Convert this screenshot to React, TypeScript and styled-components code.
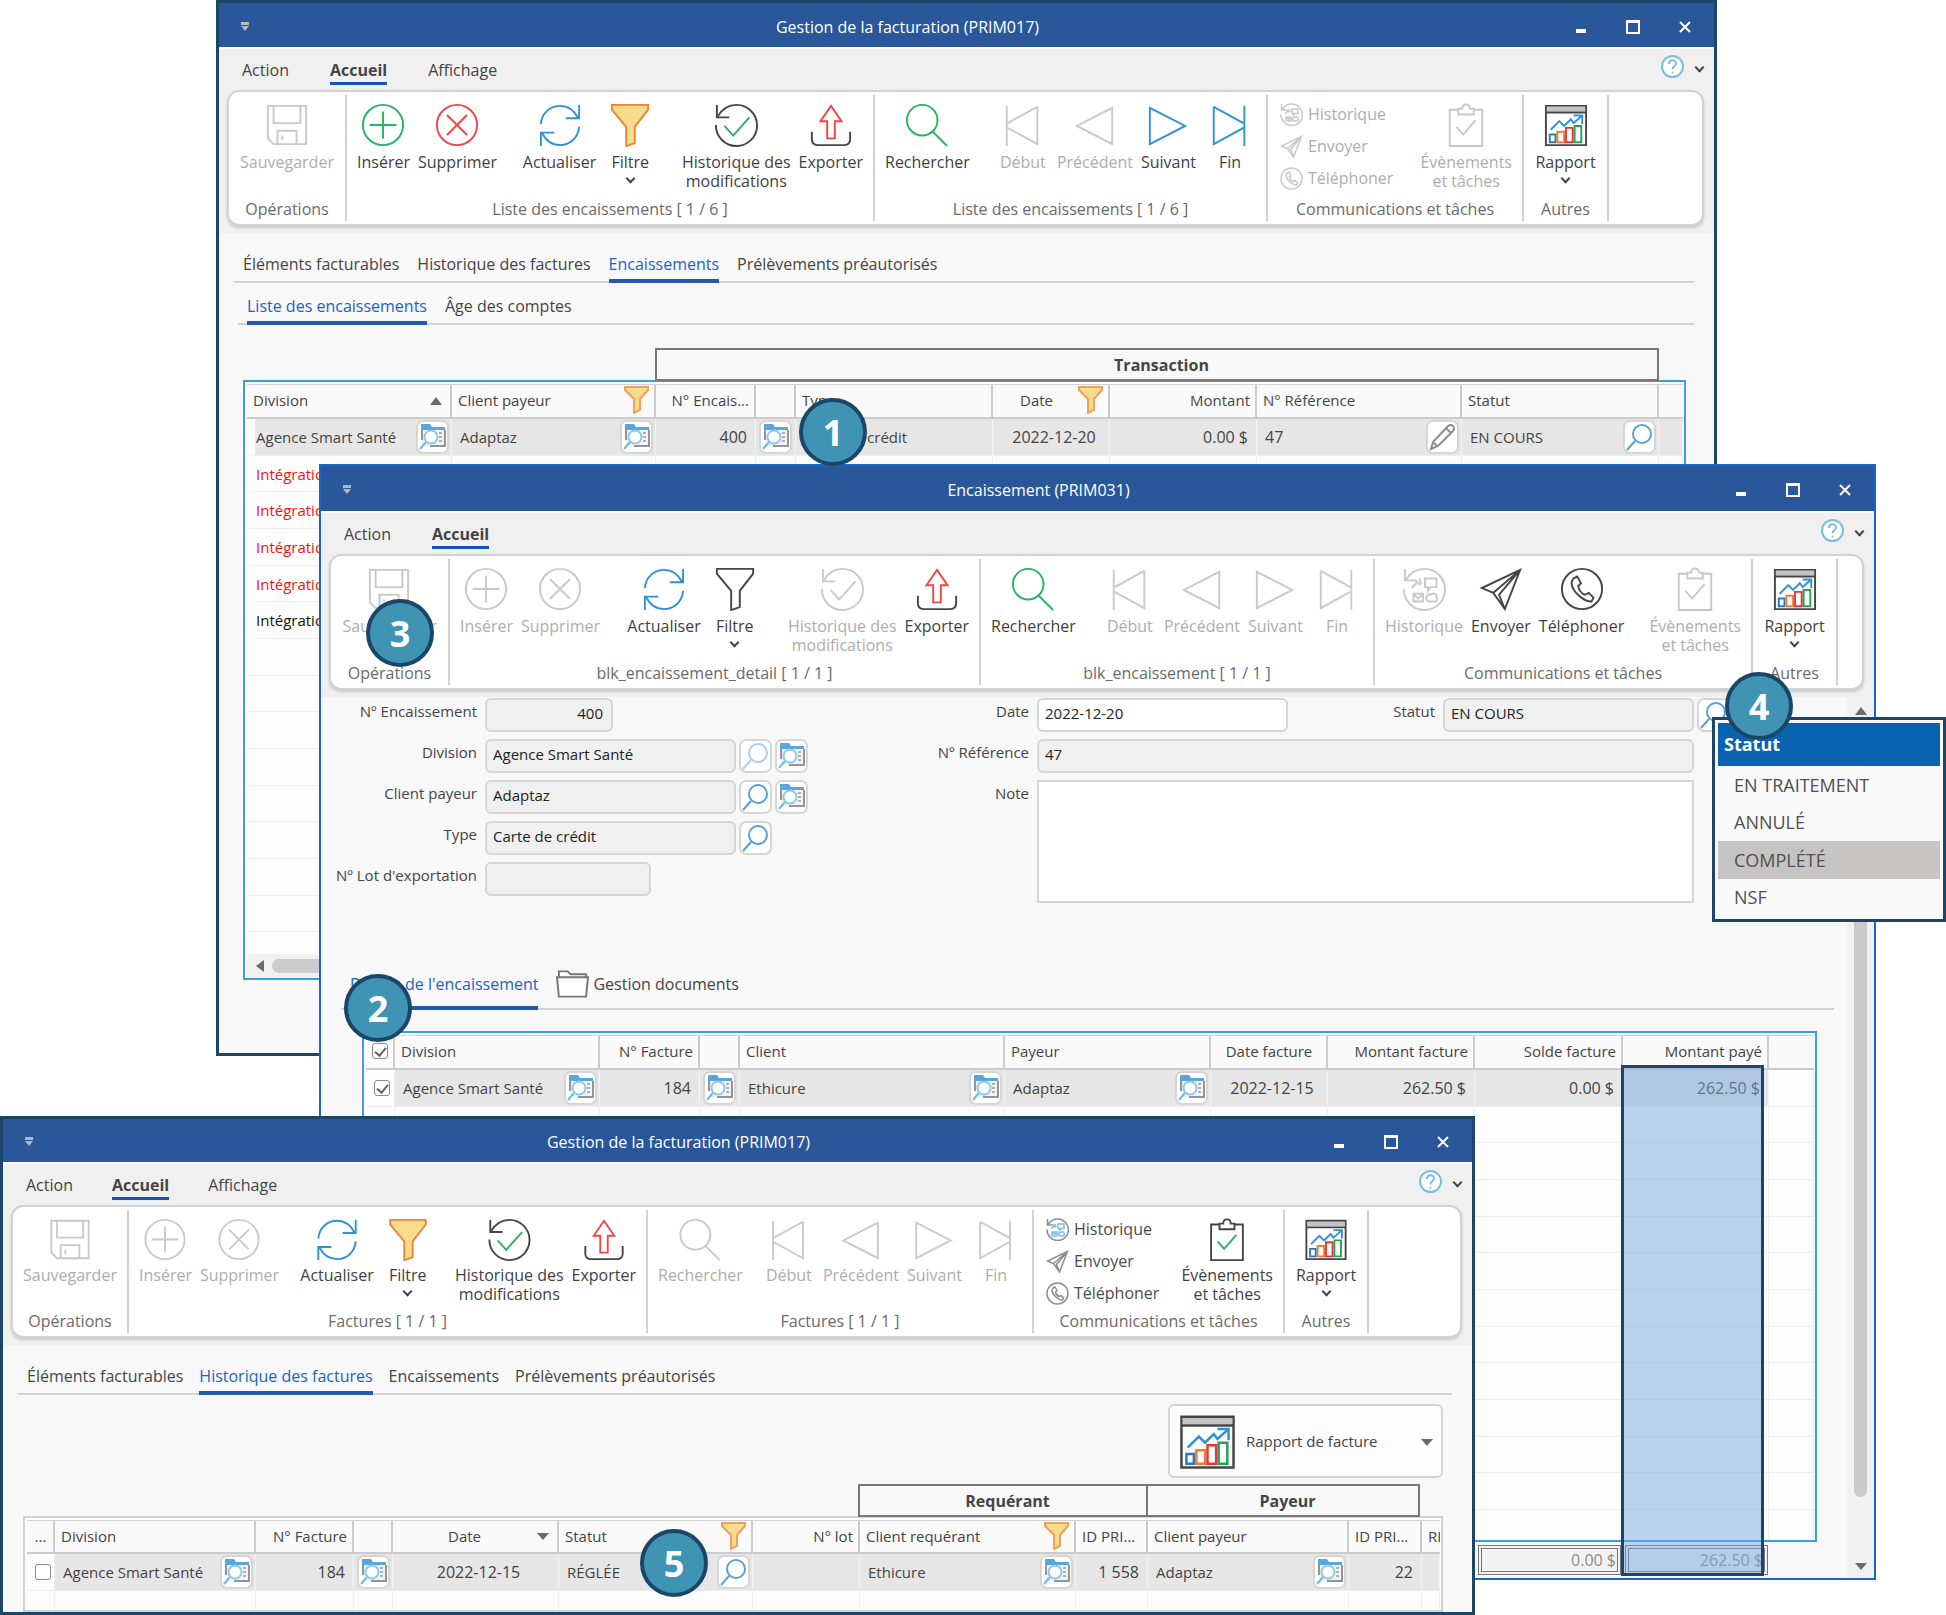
import React from 'react';
import styled, { createGlobalStyle, css } from 'styled-components';

const c = {
  navy: '#1b4669',
  title: '#2a579a',
  chrome: '#f0f0f0',
  body: '#f8f8f8',
  line: '#d2d2d2',
  text: '#444444',
  faded: '#adadad',
  off: '#c9c9c9',
  blue: '#1a62c8',
  bar: '#2459b0',
  sky: '#2e93d6',
  green: '#27b35f',
  red: '#f24545',
  dark: '#454545',
};

const GlobalStyle = createGlobalStyle`
  * { box-sizing: border-box; }
  body {
    margin: 0;
    background: #ffffff;
    color: ${c.text};
    font-family: 'Open Sans', 'Noto Sans', sans-serif;
    font-size: 16px;
    line-height: 22px;
  }
  button, input, textarea { font: inherit; color: inherit; }
  button { background: none; border: 0; padding: 0; margin: 0; }
`;

/* ------------------------------------------------------------------ desktop */

const Desktop = styled.main`
  position: relative;
  min-height: 1615px;
  overflow: hidden;
`;

const Window = styled.section<{ $x: number; $y: number; $w: number; $h: number; $edge?: string; $compact?: boolean }>`
  --edge: ${p => (p.$edge ? 2 : 3)}px;
  --bar: ${p => (p.$compact ? 46 : 47)}px;
  --icon: ${p => (p.$compact ? 43 : 44)}px;
  --icon-gap: ${p => (p.$compact ? 5 : 6)}px;
  --panel: ${p => (p.$compact ? 133 : 136)}px;
  --menu-gap: ${p => (p.$compact ? 39 : 41)}px;
  --tab-gap: ${p => (p.$compact ? 16 : 18)}px;
  --head: ${p => (p.$compact ? 33 : 34)}px;
  position: absolute;
  left: ${p => p.$x}px;
  top: ${p => p.$y}px;
  width: ${p => p.$w}px;
  height: ${p => p.$h}px;
  display: flex;
  flex-direction: column;
  overflow: hidden;
  border: var(--edge) solid ${p => p.$edge ?? c.navy};
  background: ${c.body};
`;

const TitleBar = styled.header`
  flex: none;
  display: flex;
  align-items: center;
  height: calc(var(--bar) - var(--edge));
  padding-top: 3px;
  background: ${c.title};
  color: #ffffff;
`;

const QuickAccess = styled.div`
  width: 50px;
  padding-left: 21px;
  display: flex;
`;

const Caption = styled.h1`
  flex: 1;
  margin: 0;
  font-size: 16px;
  font-weight: 400;
  line-height: 22px;
  text-align: center;
`;

const Controls = styled.div`
  width: 168px;
  padding-right: 22px;
  display: flex;
  justify-content: flex-end;
  gap: 38px;
  button { display: flex; }
`;

const Chrome = styled.div`
  flex: none;
  padding: 0 10px 7px 8px;
  background: ${c.chrome};
  border-top: 2px solid #fbfbfb;
`;

const MenuRow = styled.nav`
  display: flex;
  gap: var(--menu-gap);
  height: 41px;
  padding: 10px 0 5px 15px;
`;

const MenuItem = styled.button<{ $on?: boolean }>`
  height: 26px;
  line-height: 22px;
  padding-bottom: 1px;
  border-bottom: 3px solid ${p => (p.$on ? '#1157c4' : 'transparent')};
  font-weight: ${p => (p.$on ? 700 : 400)};
`;

const HelpBox = styled.div`
  margin-left: auto;
  display: flex;
  align-items: center;
  gap: 11px;
  height: 14px;
`;

const Panel = styled.div`
  display: flex;
  height: var(--panel);
  padding: 3px 0;
  background: #ffffff;
  border: 2px solid ${c.line};
  border-radius: 12px;
  box-shadow: 0 2px 3px rgba(0, 0, 0, 0.16);
`;

const Group = styled.div<{ $w: number }>`
  flex: 0 1 ${p => p.$w}px;
  display: flex;
  flex-direction: column;
  padding: 8px 6px 2px;
  border-right: 2px solid ${c.line};
`;

const ToolRow = styled.div<{ $center?: boolean }>`
  flex: 1;
  display: flex;
  justify-content: ${p => (p.$center ? 'center' : 'space-between')};
`;

const Cluster = styled.div`
  display: flex;
  align-items: flex-start;
`;

const GroupName = styled.div`
  line-height: 20px;
  color: #6a6a6a;
  text-align: center;
  white-space: nowrap;
`;

const ToolButton = styled.button<{ $off?: boolean }>`
  display: flex;
  flex-direction: column;
  align-items: center;
  min-width: 60px;
  padding: 0 4px;
  line-height: 19px;
  white-space: nowrap;
  color: ${p => (p.$off ? c.faded : '#3f3f3f')};
  > svg:first-child { height: var(--icon); width: 46px; margin-bottom: var(--icon-gap); }
`;

const Chevron = styled.span`
  display: block;
  width: 7px;
  height: 7px;
  margin: 3px 1px 0;
  border: solid ${c.dark};
  border-width: 0 2px 2px 0;
  transform: rotate(45deg);
`;

const SmallStack = styled.div`
  display: flex;
  flex-direction: column;
  margin-top: -5px;
  padding-left: 6px;
`;

const SmallTool = styled.button<{ $off?: boolean }>`
  display: flex;
  align-items: center;
  gap: 5px;
  height: 32px;
  color: ${p => (p.$off ? c.faded : '#4a4a4a')};
  svg { width: 23px; height: 23px; }
`;

/* --------------------------------------------------------------------- tabs */

const Tabs = styled.nav<{ $indent: number; $tall?: boolean }>`
  flex: none;
  display: flex;
  gap: var(--tab-gap);
  margin: 0 ${p => (p.$tall ? 13 : 20)}px 0 ${p => p.$indent}px;
  padding-left: 9px;
  line-height: ${p => (p.$tall ? 30 : 22)}px;
  box-shadow: inset 0 -2px 0 ${c.line};
`;

const Tab = styled.button<{ $on?: boolean; $tall?: boolean }>`
  display: flex;
  align-items: center;
  gap: 4px;
  line-height: inherit;
  white-space: nowrap;
  padding-bottom: ${p => (p.$tall ? 7 : 4)}px;
  border-bottom: 4px solid ${p => (p.$on ? c.bar : 'transparent')};
  color: ${p => (p.$on ? c.blue : c.text)};
`;

/* --------------------------------------------------------------------- grid */

const GridBox = styled.div<{ $plain?: boolean }>`
  flex: 1;
  min-height: 0;
  display: flex;
  flex-direction: column;
  overflow: hidden;
  padding: 2px 1px 0 2px;
  border: 2px solid ${p => (p.$plain ? c.line : '#3d9fd9')};
  background: #fdfdfd;
`;

const GridScroll = styled.div`
  flex: 1;
  min-height: 0;
  overflow: hidden;
`;

const Th = styled.th`
  height: var(--head);
  padding: 0 5px 2px 6px;
  overflow: hidden;
  font-weight: 400;
  background: #fafafa;
  border-right: 2px solid #cbcbcb;
  border-bottom: 2px solid #cbcbcb;
  &:last-child { border-right: 0; }
`;

const Td = styled.td<{ $sel?: boolean; $first?: boolean; $tone?: string; $tight?: boolean }>`
  height: 37px;
  padding: 0 2px 0 ${p => (p.$tight ? 3 : 8)}px;
  overflow: hidden;
  color: ${p => p.$tone ?? c.text};
  background: ${p => (p.$sel ? '#e6e6e6' : '#fdfdfd')};
  border-right: 1px solid ${p => (p.$sel ? '#f3f3f3' : '#eeeeee')};
  border-bottom: 1px solid #eeeeee;
  ${p => p.$first && css`border-left: 8px solid #fdfdfd; padding-left: 1px;`}
`;

const Table = styled.table`
  width: 100%;
  table-layout: fixed;
  border-collapse: separate;
  border-spacing: 0;
  border-top: 1px solid ${c.line};
  font-size: 15px;
  tbody tr:nth-child(3n + 2) td { height: 36px; }
`;

const Cell = styled.div<{ $align?: Align }>`
  display: flex;
  align-items: center;
  gap: 4px;
  height: 100%;
  span {
    flex: 1;
    white-space: nowrap;
    text-align: ${p => p.$align ?? 'left'};
  }
`;

const CellText = styled.span<{ $num?: boolean; $pad?: boolean }>`
  font-size: ${p => (p.$num ? 16 : 15)}px;
  padding-right: ${p => (p.$pad ? 6 : 0)}px;
`;

const IconButton = styled.button<{ $fade?: boolean }>`
  flex: none;
  display: flex;
  align-items: center;
  justify-content: center;
  width: 33px;
  height: 34px;
  background: #ffffff;
  border: 2px solid #d6d6d6;
  border-radius: 7px;
  svg { opacity: ${p => (p.$fade ? 0.5 : 1)}; }
`;

const Check = styled.input`
  appearance: none;
  display: block;
  width: 16px;
  height: 16px;
  margin: 0;
  background: #ffffff;
  border: 1px solid #8b8b8b;
  border-radius: 3px;
  &:checked::after {
    content: '';
    display: block;
    width: 5px;
    height: 9px;
    margin: 1px auto 0;
    border: solid #606060;
    border-width: 0 2px 2px 0;
    transform: rotate(40deg);
  }
`;

const Bands = styled.div`
  flex: none;
  display: flex;
  position: relative;
  z-index: 1;
  margin-bottom: -1px;
`;

const Band = styled.div<{ $w: number }>`
  width: ${p => p.$w}px;
  height: 33px;
  line-height: 31px;
  margin-right: -2px;
  padding-left: 9px;
  border: 2px solid #777777;
  font-weight: 700;
  text-align: center;
`;

const Arrow = styled.i<{ $dir: 'up' | 'down' | 'left' }>`
  flex: none;
  width: 0;
  height: 0;
  margin: 2px 3px 0;
  border: 6px solid transparent;
  ${p => p.$dir === 'up' && css`border-bottom: 8px solid #6b6b6b; border-top: 0;`}
  ${p => p.$dir === 'down' && css`border-top: 7px solid #6b6b6b; border-bottom: 0;`}
  ${p => p.$dir === 'left' && css`border-right: 8px solid #6b6b6b; border-left: 0; margin-top: 0;`}
`;

const HScroll = styled.div`
  flex: none;
  display: flex;
  align-items: center;
  gap: 5px;
  height: 24px;
  padding: 0 6px;
  background: ${c.chrome};
`;

const HThumb = styled.div`
  flex: 1;
  height: 14px;
  border-radius: 7px;
  background: #cccccc;
`;

/* ----------------------------------------------------------- window bodies */

const ListBody = styled.div`
  flex: 1;
  min-height: 0;
  display: flex;
  flex-direction: column;
  padding-top: 20px;
`;

const SubTabs = styled.div`
  margin-top: 12px;
`;

const ListArea = styled.div`
  flex: 1;
  min-height: 0;
  display: flex;
  flex-direction: column;
  margin: 23px 28px 73px 24px;
`;

const InvoiceArea = styled(ListArea)`
  margin: 9px 29px 0 20px;
`;

const BandOffset = styled.div<{ $w: number }>`
  width: ${p => p.$w}px;
`;

const ReportButton = styled.button`
  align-self: flex-end;
  flex: none;
  display: flex;
  align-items: center;
  gap: 10px;
  width: 275px;
  height: 74px;
  margin-bottom: 6px;
  padding: 0 5px 0 9px;
  background: #fdfdfd;
  border: 2px solid #d4d4d4;
  border-radius: 6px;
  font-size: 15px;
  svg { width: 57px; height: 57px; }
  span { flex: 1; text-align: left; }
`;

const DetailBody = styled.div`
  flex: 1;
  min-height: 0;
  display: flex;
`;

const DetailMain = styled.div`
  flex: 1;
  min-width: 0;
  display: flex;
  flex-direction: column;
`;

const VScroll = styled.div`
  width: 27px;
  display: flex;
  flex-direction: column;
  align-items: center;
  gap: 6px;
  padding: 8px 0;
  background: #f1f1f1;
`;

const VThumb = styled.div`
  width: 13px;
  flex: 1;
  margin-bottom: 58px;
  border-radius: 7px;
  background: #cacaca;
`;

const Form = styled.form`
  flex: none;
  display: flex;
  justify-content: space-between;
  gap: 100px;
  margin-bottom: 66px;
  padding: 1px 117px 0 12px;
  font-size: 15px;
`;

const FormColumn = styled.div<{ $grow?: boolean }>`
  display: flex;
  flex-direction: column;
  gap: 7px;
  ${p => p.$grow && css`flex: 0 0 821px;`}
`;

const Line = styled.div<{ $inset?: boolean }>`
  display: flex;
  align-items: flex-start;
  gap: 3px;
  padding-right: ${p => (p.$inset ? 36 : 0)}px;
`;

const Label = styled.label<{ $w?: number }>`
  width: ${p => (p.$w ? `${p.$w}px` : 'auto')};
  margin-right: 5px;
  line-height: 26px;
  text-align: right;
  white-space: nowrap;
`;

const Field = styled.input<{ $w?: number; $right?: boolean; $open?: boolean }>`
  ${p => (p.$w ? css`width: ${p.$w}px;` : css`flex: 1;`)}
  min-width: 0;
  height: 34px;
  padding: 0 8px 5px 6px;
  color: #222222;
  background: ${p => (p.$open ? '#ffffff' : c.chrome)};
  border: 2px solid #d5d5d5;
  border-radius: 6px;
  text-align: ${p => (p.$right ? 'right' : 'left')};
`;

const Note = styled.textarea`
  flex: 1;
  height: 123px;
  padding: 6px;
  resize: none;
  background: #ffffff;
  border: 2px solid #d5d5d5;
`;

const Push = styled.div`
  flex: 1;
`;

const DetailGrid = styled.div`
  flex: 1;
  min-height: 0;
  display: flex;
  margin: 21px 30px 0 41px;
`;

const Totals = styled.div`
  flex: none;
  display: flex;
  justify-content: flex-end;
  gap: 4px;
  margin: 3px 79px 3px 0;
`;

const Total = styled.output`
  width: 143px;
  height: 30px;
  padding: 0 1px;
  line-height: 23px;
  text-align: right;
  color: #8c8c8c;
  background: #f3f3f3;
  border: 4px double #777777;
`;

/* ----------------------------------------------------------------- overlays */

const Highlight = styled.div`
  position: absolute;
  left: 1621px;
  top: 1065px;
  width: 143px;
  height: 511px;
  background: rgba(120, 168, 220, 0.5);
  border: 3px solid ${c.navy};
`;

const Popup = styled.div`
  position: absolute;
  left: 1712px;
  top: 717px;
  width: 234px;
  height: 205px;
  display: flex;
  flex-direction: column;
  padding: 3px;
  background: #f9f9f9;
  border: 3px solid ${c.navy};
  font-size: 18px;
`;

const PopupTitle = styled.div`
  height: 43px;
  padding-left: 6px;
  line-height: 43px;
  color: #ffffff;
  background: #0a63b1;
  font-weight: 700;
`;

const Option = styled.button<{ $on?: boolean }>`
  flex: 1;
  padding-left: 16px;
  text-align: left;
  color: #505050;
  background: ${p => (p.$on ? '#c7c5c3' : 'transparent')};
`;

const Step = styled.div<{ $x: number; $y: number }>`
  position: absolute;
  left: ${p => p.$x}px;
  top: ${p => p.$y}px;
  width: 68px;
  height: 68px;
  line-height: 62px;
  border: 4px solid ${c.navy};
  border-radius: 50%;
  color: #ffffff;
  background: #3f93b3;
  font-size: 36px;
  font-weight: 700;
  text-align: center;
`;

/* -------------------------------------------------------------------- icons */

type IconProps = { off?: boolean; on?: boolean };

const Svg = ({ children, size = 46, w = 2 }: { children: React.ReactNode; size?: number; w?: number }) => (
  <svg width={size} height={size} viewBox="0 0 46 46" fill="none" strokeWidth={w} aria-hidden="true">
    {children}
  </svg>
);

const SaveIcon = ({ off }: IconProps) => (
  <Svg>
    <g stroke={off ? c.off : c.dark}>
      <path d="M3 3H43V43H9L3 37Z M9 3V21H37V3 M13 43V29H33V43 M18 34V39" />
    </g>
  </Svg>
);

const InsertIcon = ({ off }: IconProps) => (
  <Svg>
    <g stroke={off ? c.off : c.green}>
      <circle cx="23" cy="23" r="21" />
      <path d="M23 9V37M9 23H37" />
    </g>
  </Svg>
);

const DeleteIcon = ({ off }: IconProps) => (
  <Svg>
    <g stroke={off ? c.off : c.red}>
      <circle cx="23" cy="23" r="21" />
      <path d="M12.500 12.500L33.500 33.500M33.500 12.500L12.500 33.500" />
    </g>
  </Svg>
);

const RefreshIcon = () => (
  <Svg>
    <g stroke={c.sky}>
      <path d="M3 22C4 10 13 3 23 3C31 3 38 8 42 16M43 2V16H29" />
      <path d="M43 25C42 37 33 44 23 44C15 44 8 39 4 31M3 45V31H17" />
    </g>
  </Svg>
);

const FunnelIcon = ({ on }: IconProps) => (
  <Svg>
    <path
      d="M4 2H42V7L28 25V42L19 45V25L4 7Z"
      stroke={on ? '#ec8435' : c.dark}
      fill={on ? '#f8db8c' : 'none'}
    />
  </Svg>
);

const HeadFunnel = () => (
  <svg width="25" height="28" viewBox="0 0 25 28" aria-hidden="true">
    <path d="M1 1H24V4L16 13V24L10 27V13L1 4Z" fill="#f8db8c" stroke="#f0a05a" strokeWidth="2" />
  </svg>
);

const HistoryIcon = ({ off }: IconProps) => (
  <Svg>
    <g stroke={off ? c.off : c.dark}>
      <path d="M2 23A21.500 21.500 0 1 0 23.500 2C15 2 8 7 4 14" />
      <path d="M3 2V15H16" />
    </g>
    <path d="M11 24L20 34L37 15" stroke={off ? c.off : c.green} />
  </Svg>
);

const ExportIcon = () => (
  <Svg>
    <path d="M3 30V38Q3 44 9 44H37Q43 44 43 38V30" stroke={c.dark} />
    <path d="M23 3L34 19H27V37H19V19H12Z" stroke={c.red} />
  </Svg>
);

const SearchIcon = ({ off }: IconProps) => (
  <Svg>
    <g stroke={off ? c.off : c.green}>
      <circle cx="18" cy="18" r="16" />
      <path d="M29 30L44 45" />
    </g>
  </Svg>
);

const FirstIcon = ({ off }: IconProps) => (
  <Svg><path d="M6 3V45M38 4V43L7 26M38 4L7 21" stroke={off ? c.off : c.sky} /></Svg>
);

const PrevIcon = ({ off }: IconProps) => (
  <Svg><path d="M41 5V43L4 24Z" stroke={off ? c.off : c.sky} /></Svg>
);

const NextIcon = ({ off }: IconProps) => (
  <Svg><path d="M4 5V43L41 24Z" stroke={off ? c.off : c.sky} /></Svg>
);

const LastIcon = ({ off }: IconProps) => (
  <Svg><path d="M38 3V45M6 4V43L37 26M6 4L37 21" stroke={off ? c.off : c.sky} /></Svg>
);

const TaskIcon = ({ off }: IconProps) => (
  <Svg>
    <path d="M15 7H6V45H40V7H31M15 6H19C19 0 27 0 27 6H31V12H15Z" stroke={off ? c.off : c.dark} />
    <path d="M13 25L20 33L33 18" stroke={off ? c.off : c.green} />
  </Svg>
);

const ReportIcon = () => (
  <Svg>
    <path d="M2 3H44V44H2Z" stroke={c.dark} />
    <path d="M3 4H43V9H3Z" fill="#c4c4c4" stroke="none" />
    <path d="M2 10H44" stroke={c.dark} />
    <path d="M7 28L16 19L21 24L28 17L31 21L40 13M31 13H40V22" stroke={c.sky} />
    <path d="M6 33H12V41H6Z" stroke="#2b78c2" />
    <path d="M14 30H21V41H14Z" stroke="#ef7b35" />
    <path d="M23 26H30V41H23Z" stroke="#ea3434" />
    <path d="M32 24H39V41H32Z" stroke="#22a455" />
  </Svg>
);

const CommIcon = ({ off, on }: IconProps) => (
  <Svg w={on ? 3 : 2}>
    <path d="M2 23A21.500 21.500 0 1 0 23.500 2C15 2 8 7 4 13M3 2V14H15" stroke={off ? c.off : '#8d8d8d'} />
    <g stroke={off ? c.off : '#7fc0ea'}>
      <path d="M24 12H36V21H30L27 25V21H24Z" />
      <path d="M12 28H22V36H12ZM12 28L17 33L22 28" />
      <path d="M27 36C23 32 27 28 30 29C33 26 37 29 36 32C38 35 36 36 34 36Z" />
      <path d="M10 22L15 17M14 14L19 19M18 12L20 18" />
    </g>
  </Svg>
);

const SendIcon = ({ off, on }: IconProps) => (
  <Svg w={on ? 3 : 2}>
    <path d="M43 3L3 22L15 27L27 44ZM43 3L15 27M43 3L21 29L27 44" stroke={off ? c.off : on ? '#8d8d8d' : c.dark} />
  </Svg>
);

const PhoneIcon = ({ off, on }: IconProps) => (
  <Svg w={on ? 3 : 2}>
    <g stroke={off ? c.off : on ? '#8d8d8d' : c.dark}>
      <circle cx="23" cy="23" r="21" />
      <path d="M14 12L18 10L22 17L19 20C20 24 23 28 26 29L30 27L35 32L33 36C26 37 12 26 12 16Z" />
    </g>
  </Svg>
);

const LookupIcon = () => (
  <svg width="27" height="26" viewBox="0 0 27 26" fill="none" aria-hidden="true">
    <path d="M3 5H26V22H3Z" fill="#f3f3f3" />
    <path d="M2 7V0H11L13 3H26V6H2Z" fill="#5aa5db" />
    <path d="M3 6V16M26 6V22H11" stroke="#949494" strokeWidth="2" />
    <path d="M20 9H23M20 13H23M20 17H23" stroke="#b0b0b0" strokeWidth="2" />
    <path d="M1 25L7 18" stroke="#6db8ea" strokeWidth="2" />
    <circle cx="12" cy="13" r="6.500" fill="#ffffff" stroke="#8ac8f0" strokeWidth="2" />
  </svg>
);

const LensIcon = () => (
  <svg width="27" height="27" viewBox="0 0 27 27" fill="none" stroke="#5a9fd8" strokeWidth="2" aria-hidden="true">
    <circle cx="16" cy="10" r="9" />
    <path d="M9 17L1 26" />
  </svg>
);

const PencilIcon = () => (
  <svg width="27" height="27" viewBox="0 0 27 27" fill="none" stroke="#8d8d8d" strokeWidth="2" aria-hidden="true">
    <path d="M2 25L4 18L19 2Q22 0 24 2Q26 5 24 7L9 22ZM17 4L22 9M5 19L8 22" />
  </svg>
);

const FolderIcon = () => (
  <svg width="33" height="30" viewBox="0 0 34 30" fill="#ffffff" stroke="#777777" strokeWidth="2" aria-hidden="true">
    <path d="M3 8V2H12L15 5H31V8" />
    <path d="M1 8H33L31 28H3Z" />
  </svg>
);

const HelpIcon = () => (
  <svg width="23" height="23" viewBox="0 0 23 23" aria-hidden="true">
    <circle cx="11.500" cy="11.500" r="10.500" fill="#ffffff" stroke="#7cbce4" strokeWidth="2" />
    <path d="M8 9C8 4 15 4 15 8.500C15 11 11.500 11 11.500 14.500" fill="none" stroke="#7cbce4" strokeWidth="2" />
    <circle cx="11.500" cy="17.500" r="1" fill="#7cbce4" />
  </svg>
);

/* --------------------------------------------------------- shared fragments */

const Tool = ({ icon, label, second, off, menu }: {
  icon: React.ReactNode; label: string; second?: string; off?: boolean; menu?: boolean;
}) => (
  <ToolButton type="button" $off={off}>
    {icon}
    <span>{label}</span>
    {second && <span>{second}</span>}
    {menu && <Chevron />}
  </ToolButton>
);

type RibbonProps = {
  menu: string[];
  list: string;
  nav: string;
  widths: number[];
  edit?: boolean;
  filtered?: boolean;
  history?: boolean;
  search?: boolean;
  forward?: boolean;
  tasks?: boolean;
  comm: 'small' | 'large';
};

const Ribbon = (p: RibbonProps) => (
  <Chrome>
    <MenuRow>
      {p.menu.map(m => <MenuItem key={m} type="button" $on={m === 'Accueil'}>{m}</MenuItem>)}
      <HelpBox>
        <HelpIcon />
        <Chevron />
      </HelpBox>
    </MenuRow>
    <Panel>
      <Group $w={p.widths[0]}>
        <ToolRow $center><Tool off icon={<SaveIcon off />} label="Sauvegarder" /></ToolRow>
        <GroupName>Opérations</GroupName>
      </Group>
      <Group $w={p.widths[1]}>
        <ToolRow>
          <Cluster>
            <Tool off={!p.edit} icon={<InsertIcon off={!p.edit} />} label="Insérer" />
            <Tool off={!p.edit} icon={<DeleteIcon off={!p.edit} />} label="Supprimer" />
          </Cluster>
          <Cluster>
            <Tool icon={<RefreshIcon />} label="Actualiser" />
            <Tool menu icon={<FunnelIcon on={p.filtered} />} label="Filtre" />
          </Cluster>
          <Cluster>
            <Tool off={!p.history} icon={<HistoryIcon off={!p.history} />} label="Historique des" second="modifications" />
            <Tool icon={<ExportIcon />} label="Exporter" />
          </Cluster>
        </ToolRow>
        <GroupName>{p.list}</GroupName>
      </Group>
      <Group $w={p.widths[2]}>
        <ToolRow>
          <Cluster><Tool off={!p.search} icon={<SearchIcon off={!p.search} />} label="Rechercher" /></Cluster>
          <Cluster>
            <Tool off icon={<FirstIcon off />} label="Début" />
            <Tool off icon={<PrevIcon off />} label="Précédent" />
            <Tool off={!p.forward} icon={<NextIcon off={!p.forward} />} label="Suivant" />
            <Tool off={!p.forward} icon={<LastIcon off={!p.forward} />} label="Fin" />
          </Cluster>
        </ToolRow>
        <GroupName>{p.nav}</GroupName>
      </Group>
      <Group $w={p.widths[3]}>
        <ToolRow>
          {p.comm === 'small' ? (
            <SmallStack>
              <SmallTool type="button" $off={!p.tasks}><CommIcon on off={!p.tasks} />Historique</SmallTool>
              <SmallTool type="button" $off={!p.tasks}><SendIcon on off={!p.tasks} />Envoyer</SmallTool>
              <SmallTool type="button" $off={!p.tasks}><PhoneIcon on off={!p.tasks} />Téléphoner</SmallTool>
            </SmallStack>
          ) : (
            <Cluster>
              <Tool off icon={<CommIcon off />} label="Historique" />
              <Tool icon={<SendIcon />} label="Envoyer" />
              <Tool icon={<PhoneIcon />} label="Téléphoner" />
            </Cluster>
          )}
          <Cluster>
            <Tool off={!p.tasks} icon={<TaskIcon off={!p.tasks} />} label="Évènements" second="et tâches" />
          </Cluster>
        </ToolRow>
        <GroupName>Communications et tâches</GroupName>
      </Group>
      <Group $w={p.widths[4]}>
        <ToolRow $center><Tool menu icon={<ReportIcon />} label="Rapport" /></ToolRow>
        <GroupName>Autres</GroupName>
      </Group>
    </Panel>
  </Chrome>
);

const Title = ({ children }: { children: string }) => (
  <TitleBar>
    <QuickAccess>
      <svg width="10" height="10" viewBox="0 0 10 10" aria-hidden="true">
        <path d="M1 0H9V3H1ZM1 4H9L5 9Z" fill="#b4b8bd" />
      </svg>
    </QuickAccess>
    <Caption>{children}</Caption>
    <Controls>
      <button type="button" aria-label="Réduire">
        <svg width="14" height="14" viewBox="0 0 14 14"><path d="M2 9H12V13H2Z" fill="#ffffff" /></svg>
      </button>
      <button type="button" aria-label="Agrandir">
        <svg width="14" height="14" viewBox="0 0 14 14">
          <path d="M1 1H13V13H1ZM1 2H13" fill="none" stroke="#ffffff" strokeWidth="2" />
        </svg>
      </button>
      <button type="button" aria-label="Fermer">
        <svg width="14" height="14" viewBox="0 0 14 14">
          <path d="M2 2L12 12M12 2L2 12" stroke="#ffffff" strokeWidth="2" />
        </svg>
      </button>
    </Controls>
  </TitleBar>
);

type Align = 'left' | 'center' | 'right';
type Column = { w?: number; label?: React.ReactNode; align?: Align; mark?: React.ReactNode };
type Entry = { text?: React.ReactNode; align?: Align; num?: boolean; action?: React.ReactNode; blank?: boolean };

const Look = ({ name = 'Consulter' }: { name?: string }) => (
  <IconButton type="button" aria-label={name}><LookupIcon /></IconButton>
);

const Lens = ({ fade }: { fade?: boolean }) => (
  <IconButton type="button" aria-label="Rechercher" $fade={fade}><LensIcon /></IconButton>
);

const DataGrid = ({ columns, row, below = [], empty, mark }: {
  columns: Column[]; row: Entry[]; below?: { text: string; tone: string }[]; empty: number; mark?: boolean;
}) => (
  <GridScroll>
    <Table>
      <colgroup>{columns.map((col, i) => <col key={i} width={col.w} />)}</colgroup>
      <thead>
        <tr>
          {columns.map((col, i) => (
            <Th key={i} scope="col">
              <Cell $align={col.align}><CellText>{col.label}</CellText>{col.mark}</Cell>
            </Th>
          ))}
        </tr>
      </thead>
      <tbody>
        <tr>
          {row.map((e, i) => (
            <Td key={i} $sel={!e.blank} $first={mark && i === 0} $tight={!e.text && !!e.action}>
              <Cell $align={e.align}>
                {(e.text || !e.action) && <CellText $num={e.num} $pad={e.align === 'right' && !e.action}>{e.text}</CellText>}
                {e.action}
              </Cell>
            </Td>
          ))}
        </tr>
        {below.map((b, r) => (
          <tr key={r}>
            {columns.map((_, i) => (
              <Td key={i} $tone={b.tone} $first={mark && i === 0}>{i === 0 && <Cell><CellText>{b.text}</CellText></Cell>}</Td>
            ))}
          </tr>
        ))}
        {Array.from({ length: empty }, (_, r) => (
          <tr key={`e${r}`}>{columns.map((_, i) => <Td key={i} />)}</tr>
        ))}
      </tbody>
    </Table>
  </GridScroll>
);

/* ------------------------------------------------------------------ windows */

const ReceiptList = () => (
  <Window $x={216} $y={0} $w={1501} $h={1056}>
    <Title>Gestion de la facturation (PRIM017)</Title>
    <Ribbon
      menu={['Action', 'Accueil', 'Affichage']}
      list="Liste des encaissements [ 1 / 6 ]"
      nav="Liste des encaissements [ 1 / 6 ]"
      widths={[118, 528, 393, 256, 85]}
      edit filtered history search forward
      comm="small"
    />
    <ListBody>
      <Tabs $indent={15}>
        <Tab type="button">Éléments facturables</Tab>
        <Tab type="button">Historique des factures</Tab>
        <Tab type="button" $on>Encaissements</Tab>
        <Tab type="button">Prélèvements préautorisés</Tab>
      </Tabs>
      <SubTabs>
        <Tabs $indent={19}>
          <Tab type="button" $on>Liste des encaissements</Tab>
          <Tab type="button">Âge des comptes</Tab>
        </Tabs>
      </SubTabs>
      <ListArea>
        <Bands><BandOffset $w={412} /><Band $w={1004}>Transaction</Band></Bands>
        <GridBox>
          <DataGrid
            mark
            columns={[
              { w: 205, label: 'Division', mark: <Arrow $dir="up" /> },
              { w: 204, label: 'Client payeur', mark: <HeadFunnel /> },
              { w: 100, label: 'N° Encais...', align: 'right' },
              { w: 40 },
              { w: 197, label: 'Type' },
              { w: 117, label: 'Date', align: 'center', mark: <HeadFunnel /> },
              { w: 147, label: 'Montant', align: 'right' },
              { w: 205, label: 'N° Référence' },
              { w: 197, label: 'Statut' },
              {},
            ]}
            row={[
              { text: 'Agence Smart Santé', action: <Look /> },
              { text: 'Adaptaz', action: <Look /> },
              { text: '400', align: 'right', num: true },
              { action: <Look /> },
              { text: 'Carte de crédit' },
              { text: '2022-12-20', align: 'center', num: true },
              { text: '0.00 $', align: 'right', num: true },
              { text: '47', num: true, action: <IconButton type="button" aria-label="Modifier"><PencilIcon /></IconButton> },
              { text: 'EN COURS', action: <Lens /> },
              {},
            ]}
            below={[
              { text: 'Intégration', tone: '#f01414' },
              { text: 'Intégration', tone: '#f01414' },
              { text: 'Intégration', tone: '#f01414' },
              { text: 'Intégration', tone: '#f01414' },
              { text: 'Intégration', tone: '#111111' },
            ]}
            empty={9}
          />
          <HScroll><Arrow $dir="left" /><HThumb /></HScroll>
        </GridBox>
      </ListArea>
    </ListBody>
  </Window>
);

const ReceiptDetail = () => (
  <Window $x={319} $y={464} $w={1557} $h={1116} $edge="#1767c4">
    <Title>Encaissement (PRIM031)</Title>
    <Ribbon
      menu={['Action', 'Accueil']}
      list="blk_encaissement_detail [ 1 / 1 ]"
      nav="blk_encaissement [ 1 / 1 ]"
      widths={[119, 531, 394, 378, 85]}
      search
      comm="large"
    />
    <DetailBody>
      <DetailMain>
        <Form>
          <FormColumn>
            <Line>
              <Label $w={144} htmlFor="no">Nº Encaissement</Label>
              <Field id="no" $w={128} $right readOnly defaultValue="400" />
            </Line>
            <Line>
              <Label $w={144} htmlFor="division">Division</Label>
              <Field id="division" $w={251} readOnly defaultValue="Agence Smart Santé" />
              <Lens fade />
              <Look />
            </Line>
            <Line>
              <Label $w={144} htmlFor="payer">Client payeur</Label>
              <Field id="payer" $w={251} readOnly defaultValue="Adaptaz" />
              <Lens />
              <Look />
            </Line>
            <Line>
              <Label $w={144} htmlFor="type">Type</Label>
              <Field id="type" $w={251} readOnly defaultValue="Carte de crédit" />
              <Lens />
            </Line>
            <Line>
              <Label $w={144} htmlFor="lot">Nº Lot d'exportation</Label>
              <Field id="lot" $w={166} readOnly />
            </Line>
          </FormColumn>
          <FormColumn $grow>
            <Line>
              <Label $w={120} htmlFor="date">Date</Label>
              <Field id="date" $w={251} $open defaultValue="2022-12-20" />
              <Push />
              <Label htmlFor="status">Statut</Label>
              <Field id="status" $w={251} readOnly defaultValue="EN COURS" />
              <Lens />
            </Line>
            <Line $inset>
              <Label $w={120} htmlFor="ref">Nº Référence</Label>
              <Field id="ref" readOnly defaultValue="47" />
            </Line>
            <Line $inset>
              <Label $w={120} htmlFor="note">Note</Label>
              <Note id="note" />
            </Line>
          </FormColumn>
        </Form>
        <Tabs $indent={20} $tall>
          <Tab type="button" $on $tall>Détails de l'encaissement</Tab>
          <Tab type="button" $tall><FolderIcon />Gestion documents</Tab>
        </Tabs>
        <DetailGrid>
          <GridBox>
            <DataGrid
              columns={[
                { w: 29, label: <Check type="checkbox" defaultChecked aria-label="Tout sélectionner" /> },
                { w: 205, label: 'Division' },
                { w: 100, label: 'N° Facture', align: 'right' },
                { w: 40 },
                { w: 265, label: 'Client' },
                { w: 206, label: 'Payeur' },
                { w: 117, label: 'Date facture', align: 'center' },
                { w: 147, label: 'Montant facture', align: 'right' },
                { w: 148, label: 'Solde facture', align: 'right' },
                { w: 146, label: 'Montant payé', align: 'right' },
                {},
              ]}
              row={[
                { text: <Check type="checkbox" defaultChecked aria-label="Facture 184" />, blank: true },
                { text: 'Agence Smart Santé', action: <Look /> },
                { text: '184', align: 'right', num: true },
                { action: <Look /> },
                { text: 'Ethicure', action: <Look /> },
                { text: 'Adaptaz', action: <Look /> },
                { text: '2022-12-15', align: 'center', num: true },
                { text: '262.50 $', align: 'right', num: true },
                { text: '0.00 $', align: 'right', num: true },
                { text: '262.50 $', align: 'right', num: true },
                { blank: true },
              ]}
              empty={12}
            />
          </GridBox>
        </DetailGrid>
        <Totals>
          <Total>0.00 $</Total>
          <Total>262.50 $</Total>
        </Totals>
      </DetailMain>
      <VScroll>
        <Arrow $dir="up" />
        <VThumb />
        <Arrow $dir="down" />
      </VScroll>
    </DetailBody>
  </Window>
);

const InvoiceHistory = () => (
  <Window $x={0} $y={1116} $w={1475} $h={499} $compact>
    <Title>Gestion de la facturation (PRIM017)</Title>
    <Ribbon
      menu={['Action', 'Accueil', 'Affichage']}
      list="Factures [ 1 / 1 ]"
      nav="Factures [ 1 / 1 ]"
      widths={[116, 519, 386, 251, 84]}
      filtered history tasks
      comm="small"
    />
    <ListBody>
      <Tabs $indent={15}>
        <Tab type="button">Éléments facturables</Tab>
        <Tab type="button" $on>Historique des factures</Tab>
        <Tab type="button">Encaissements</Tab>
        <Tab type="button">Prélèvements préautorisés</Tab>
      </Tabs>
      <InvoiceArea>
        <ReportButton type="button"><ReportIcon /><span>Rapport de facture</span><Arrow $dir="down" /></ReportButton>
        <Bands><BandOffset $w={835} /><Band $w={290}>Requérant</Band><Band $w={274}>Payeur</Band></Bands>
        <GridBox $plain>
          <DataGrid
            columns={[
              { w: 28, label: '...', align: 'center' },
              { w: 201, label: 'Division' },
              { w: 98, label: 'N° Facture', align: 'right' },
              { w: 39 },
              { w: 166, label: 'Date', align: 'center', mark: <Arrow $dir="down" /> },
              { w: 194, label: 'Statut', mark: <HeadFunnel /> },
              { w: 107, label: 'N° lot', align: 'right' },
              { w: 216, label: 'Client requérant', mark: <HeadFunnel /> },
              { w: 72, label: 'ID PRI...' },
              { w: 201, label: 'Client payeur' },
              { w: 73, label: 'ID PRI...' },
              { label: 'RI' },
            ]}
            row={[
              { text: <Check type="checkbox" aria-label="Facture 184" />, blank: true },
              { text: 'Agence Smart Santé', action: <Look /> },
              { text: '184', align: 'right', num: true },
              { action: <Look /> },
              { text: '2022-12-15', align: 'center', num: true },
              { text: 'RÉGLÉE', action: <Lens /> },
              {},
              { text: 'Ethicure', action: <Look /> },
              { text: '1 558', align: 'right', num: true },
              { text: 'Adaptaz', action: <Look /> },
              { text: '22', align: 'right', num: true },
              {},
            ]}
            empty={1}
          />
        </GridBox>
      </InvoiceArea>
    </ListBody>
  </Window>
);

const App = () => (
  <>
    <GlobalStyle />
    <Desktop>
      <ReceiptList />
      <ReceiptDetail />
      <Highlight />
      <InvoiceHistory />
      <Popup>
        <PopupTitle>Statut</PopupTitle>
        <Option type="button">EN TRAITEMENT</Option>
        <Option type="button">ANNULÉ</Option>
        <Option type="button" $on>COMPLÉTÉ</Option>
        <Option type="button">NSF</Option>
      </Popup>
      <Step $x={799} $y={398}>1</Step>
      <Step $x={344} $y={974}>2</Step>
      <Step $x={366} $y={599}>3</Step>
      <Step $x={1725} $y={672}>4</Step>
      <Step $x={640} $y={1529}>5</Step>
    </Desktop>
  </>
);

export default App;
